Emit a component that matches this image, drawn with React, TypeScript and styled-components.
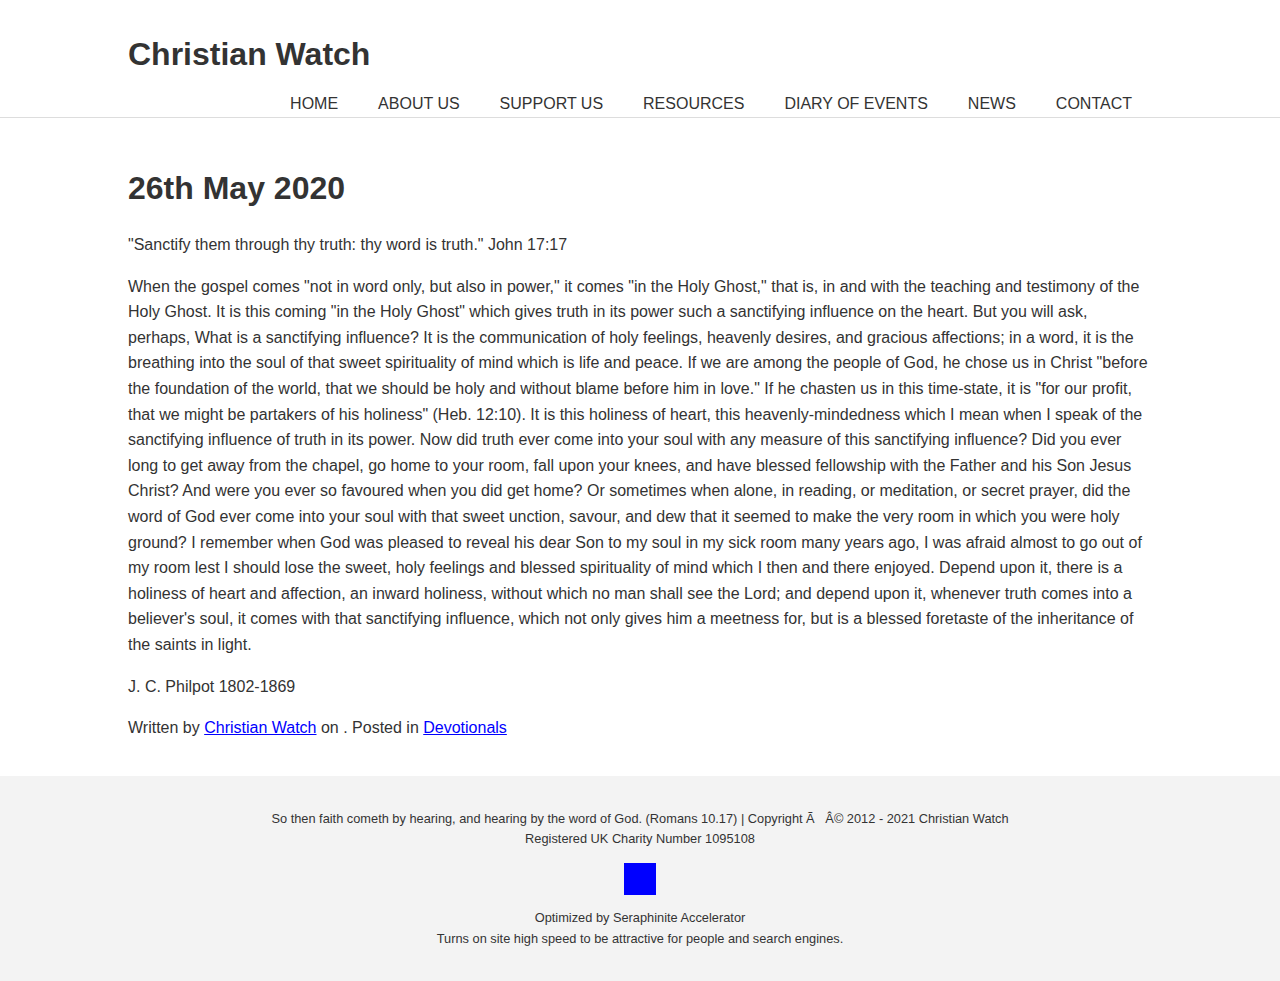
import React from "react";
import styled, { createGlobalStyle } from "styled-components";

const GlobalStyle = createGlobalStyle`
  html, body { margin: 0; padding: 0; background: #fff; }
  body {
    font-family: "Liberation Sans", Arial, Helvetica, sans-serif;
    color: #333;
    font-size: 16px;
  }
`;

const Header = styled.header`
  border-bottom: 1px solid #ddd;
`;

const HeaderInner = styled.div`
  width: 1024px;
  margin: 0 auto;
  padding-top: 36px;
  display: flex;
  flex-direction: column;
`;

const SiteTitle = styled.h1`
  margin: 0;
  font-size: 32px;
  line-height: 37px;
  font-weight: 700;
  color: #333;
`;

const Nav = styled.nav`
  margin-top: 21px;
  display: flex;
  justify-content: flex-end;
  padding-bottom: 3px;
`;

const NavItem = styled.a`
  padding: 0 20px;
  font-size: 16px;
  line-height: 20px;
  color: #333;
  text-decoration: none;
  text-transform: uppercase;
`;

const Main = styled.main`
  width: 1024px;
  margin: 0 auto;
  padding-top: 52px;
  padding-bottom: 19px;
`;

const PostTitle = styled.h2`
  margin: 0 0 25px;
  font-size: 32px;
  line-height: 37px;
  font-weight: 700;
  color: #333;
`;

const Para = styled.p`
  margin: 0 0 16px;
  font-size: 16px;
  line-height: 25.6px;
  color: #333;
`;

const Link = styled.a`
  color: #00f;
  text-decoration: underline;
`;

const Footer = styled.footer`
  background: #f3f3f3;
  padding: 33px 0 33px;
  display: flex;
  flex-direction: column;
  align-items: center;
  text-align: center;
  font-size: 12.8px;
  color: #333;
`;

const FootLine = styled.div<{ $lh?: number }>`
  line-height: ${(p) => p.$lh ?? 20}px;
`;

const Badge = styled.div`
  width: 32px;
  height: 32px;
  background: #00f;
  margin: 14px 0 12px;
`;

const navItems = ["Home", "About Us", "Support Us", "Resources", "Diary of Events", "News", "Contact"];

export default function App() {
  return (
    <>
      <GlobalStyle />
      <Header>
        <HeaderInner>
          <SiteTitle>Christian Watch</SiteTitle>
          <Nav>
            {navItems.map((n) => (
              <NavItem key={n} href="#">{n}</NavItem>
            ))}
          </Nav>
        </HeaderInner>
      </Header>
      <Main>
        <PostTitle>26th May 2020</PostTitle>
        <Para>"Sanctify them through thy truth: thy word is truth." John 17:17</Para>
        <Para>
          When the gospel comes "not in word only, but also in power," it comes "in the Holy Ghost," that is, in and with the teaching and testimony of the Holy Ghost. It is this coming "in the Holy Ghost" which gives truth in its power such a sanctifying influence on the heart. But you will ask, perhaps, What is a sanctifying influence? It is the communication of holy feelings, heavenly desires, and gracious affections; in a word, it is the breathing into the soul of that sweet spirituality of mind which is life and peace. If we are among the people of God, he chose us in Christ "before the foundation of the world, that we should be holy and without blame before him in love." If he chasten us in this time-state, it is "for our profit, that we might be partakers of his holiness" (Heb. 12:10). It is this holiness of heart, this heavenly-mindedness which I mean when I speak of the sanctifying influence of truth in its power. Now did truth ever come into your soul with any measure of this sanctifying influence? Did you ever long to get away from the chapel, go home to your room, fall upon your knees, and have blessed fellowship with the Father and his Son Jesus Christ? And were you ever so favoured when you did get home? Or sometimes when alone, in reading, or meditation, or secret prayer, did the word of God ever come into your soul with that sweet unction, savour, and dew that it seemed to make the very room in which you were holy ground? I remember when God was pleased to reveal his dear Son to my soul in my sick room many years ago, I was afraid almost to go out of my room lest I should lose the sweet, holy feelings and blessed spirituality of mind which I then and there enjoyed. Depend upon it, there is a holiness of heart and affection, an inward holiness, without which no man shall see the Lord; and depend upon it, whenever truth comes into a believer's soul, it comes with that sanctifying influence, which not only gives him a meetness for, but is a blessed foretaste of the inheritance of the saints in light.
        </Para>
        <Para>J. C. Philpot 1802-1869</Para>
        <Para>
          Written by <Link href="#">Christian Watch</Link> on . Posted in <Link href="#">Devotionals</Link>
        </Para>
      </Main>
      <Footer>
        <FootLine>
          So then faith cometh by hearing, and hearing by the word of God. (Romans 10.17) | Copyright Ã{"\u00a0\u00a0\u00a0"}Â© 2012 - 2021 Christian Watch
        </FootLine>
        <FootLine>Registered UK Charity Number 1095108</FootLine>
        <Badge />
        <FootLine $lh={21}>Optimized by Seraphinite Accelerator</FootLine>
        <FootLine $lh={21}>Turns on site high speed to be attractive for people and search engines.</FootLine>
      </Footer>
    </>
  );
}
